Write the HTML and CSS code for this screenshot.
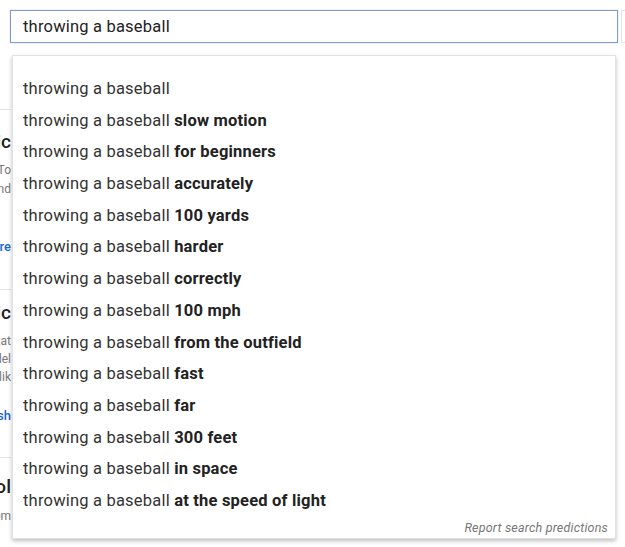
FILE: index.html
```html
<!DOCTYPE html>
<html>
<head>
<meta charset="utf-8">
<link rel="stylesheet" href="styles.css">
</head>
<body>
<div class="page">
  <div class="search">
    <div class="input">throwing a baseball</div>
    <div class="input-edge"></div>
  </div>
  <div class="bg">
    <div class="strip">
      <section class="card c1">
        <div class="h">Topic</div>
        <div class="g g1">To</div>
        <div class="g">and</div>
        <div class="lnk">more</div>
      </section>
      <section class="card c2">
        <div class="h">Topic</div>
        <div class="g g1">stat</div>
        <div class="g">model</div>
        <div class="g">lik</div>
        <div class="lnk l2">Refresh</div>
      </section>
      <section class="card c3">
        <div class="h">Tool</div>
        <div class="g g1">Custom</div>
      </section>
    </div>
    <div class="bottom-line">Unprioritized optimization manage multiple campaigns; set Keywords and budget</div>
  </div>
  <div class="dropdown">
    <ul class="list">
      <li>throwing a baseball</li>
      <li>throwing a baseball <b>slow motion</b></li>
      <li>throwing a baseball <b>for beginners</b></li>
      <li>throwing a baseball <b>accurately</b></li>
      <li>throwing a baseball <b>100 yards</b></li>
      <li>throwing a baseball <b>harder</b></li>
      <li>throwing a baseball <b>correctly</b></li>
      <li>throwing a baseball <b>100 mph</b></li>
      <li>throwing a baseball <b>from the outfield</b></li>
      <li>throwing a baseball <b>fast</b></li>
      <li>throwing a baseball <b>far</b></li>
      <li>throwing a baseball <b>300 feet</b></li>
      <li>throwing a baseball <b>in space</b></li>
      <li>throwing a baseball <b>at the speed of light</b></li>
    </ul>
    <div class="report">Report search predictions</div>
  </div>
</div>
</body>
</html>
```

FILE: styles.css
```css
html, body {
  margin: 0;
  padding: 0;
  background: #fff;
}
body {
  font-family: Roboto, "Liberation Sans", Arial, sans-serif;
  color: #222;
}
.page {
  position: relative;
  width: 625px;
  height: 547px;
  overflow: hidden;
}
.search {
  display: flex;
  padding-top: 10px;
  height: 33px;
}
.input {
  flex-shrink: 0;
  margin-left: 10px;
  width: 594px;
  height: 31px;
  border: 1px solid #7e9ad0;
  box-shadow: 0 0 1px rgba(90, 130, 200, 0.6);
  padding-left: 12px;
  font-size: 16.5px;
  letter-spacing: 0.2px;
  line-height: 31px;
  color: #222;
}
.input-edge {
  flex-shrink: 0;
  margin-left: 3px;
  width: 6px;
  border-left: 1px solid #e4e4e4;
  border-top: 1px solid #e4e4e4;
  border-bottom: 1px solid #e4e4e4;
}
.bg {
  position: relative;
}
.strip {
  width: 11px;
  overflow: hidden;
  direction: rtl;
  white-space: nowrap;
  margin-top: 66px;
}
.card {
  border-top: 1px solid #e3e3e3;
}
.h {
  font-size: 19px;
  font-weight: 500;
  color: #222;
  line-height: 22px;
  margin-top: 21px;
}
.g {
  font-size: 12px;
  color: #777;
  line-height: 19px;
}
.g1 { margin-top: 8px; }
.lnk {
  font-size: 13px;
  color: #1a66d6;
  font-weight: 500;
  line-height: 16px;
  margin-top: 40px;
}
.c1 { height: 179px; }
.c2 { height: 167px; }
.c2 .h { margin-top: 12px; }
.c2 .g { line-height: 18px; }
.l2 { margin-top: 22px; }
.c3 .h { margin-top: 18px; }
.c3 .g1 { margin-top: 9px; }
.bottom-line {
  position: absolute;
  left: 0;
  top: 487px;
  font-size: 12px;
  color: #888;
  white-space: nowrap;
}
.dropdown {
  position: absolute;
  left: 12px;
  top: 55px;
  width: 602px;
  height: 482px;
  background: #fff;
  border: 1px solid #e2e2e2;
  box-shadow: 0 2px 4px rgba(0, 0, 0, 0.25);
  display: flex;
  flex-direction: column;
}
.list {
  list-style: none;
  margin: 0;
  padding: 17px 0 0 10px;
}
.list li {
  font-size: 16.5px;
  letter-spacing: 0.2px;
  line-height: 31.7px;
  height: 31.7px;
  color: #333;
  white-space: nowrap;
}
.list b {
  font-weight: 700;
  color: #222;
}
.report {
  margin-top: auto;
  align-self: flex-end;
  padding: 0 7px 2px 0;
  font-size: 12.5px;
  letter-spacing: 0.2px;
  font-style: italic;
  color: #777;
  line-height: 16px;
}
```
